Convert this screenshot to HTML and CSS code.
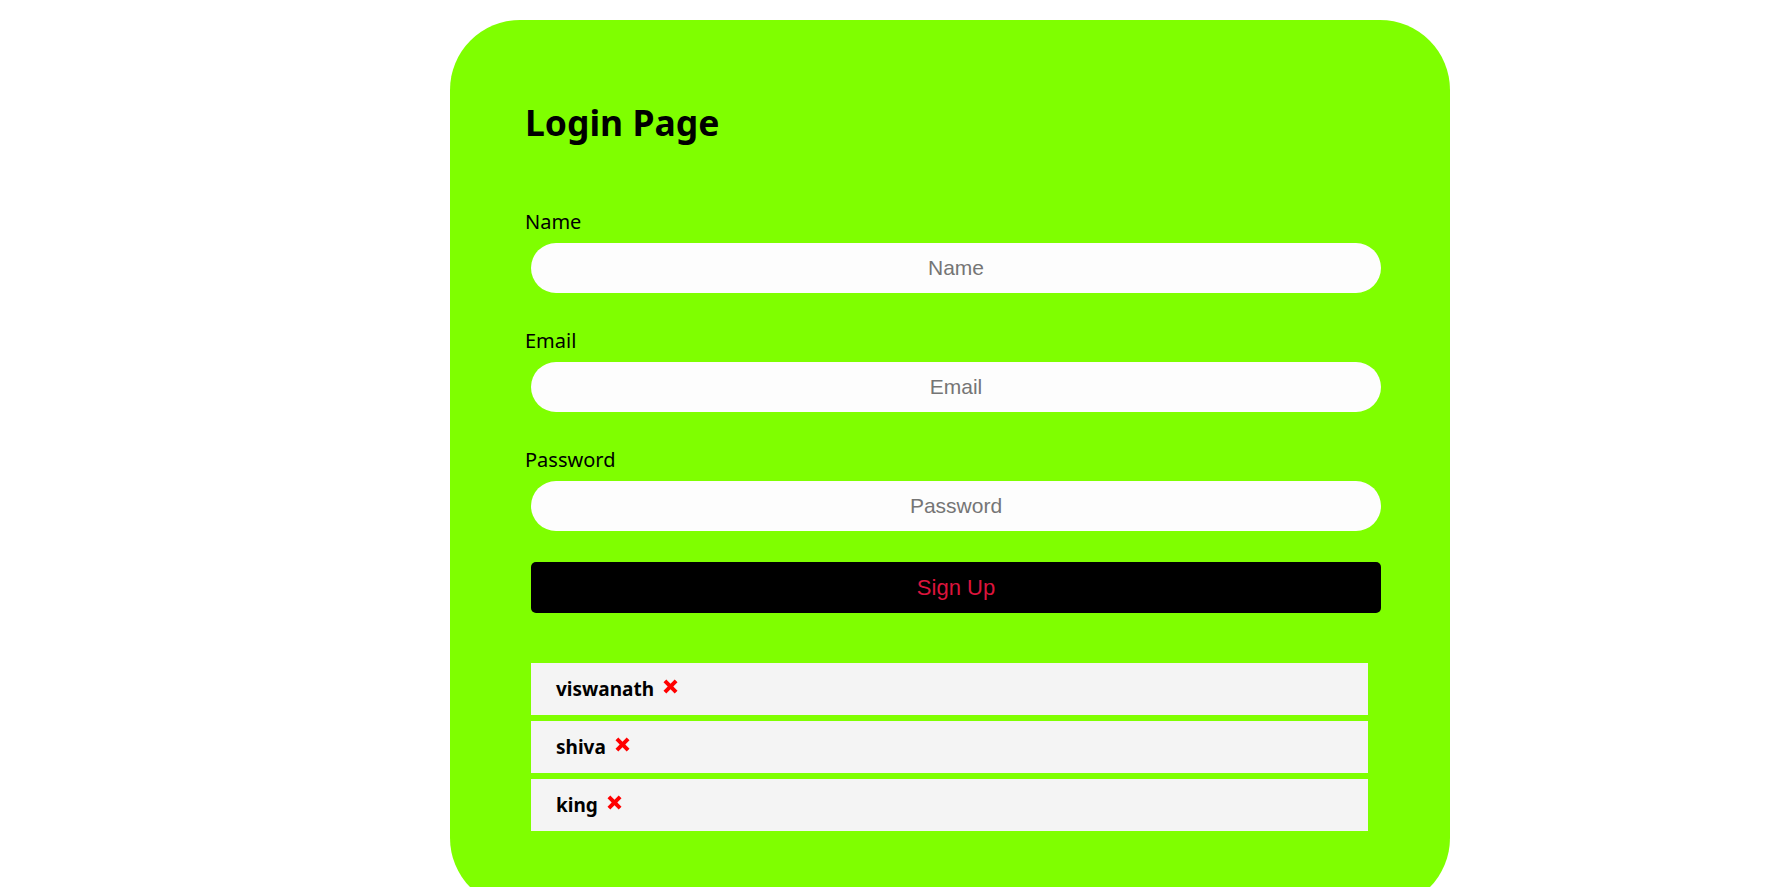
FILE: index.html
```html
<!DOCTYPE html>
<html lang="en">
<head>
<meta charset="utf-8">
<title>Login Page</title>
<link rel="stylesheet" href="styles.css">
</head>
<body>
<div class="card">
  <h1 class="title">Login Page</h1>
  <form class="form">
    <div class="field">
      <label class="label" for="name">Name</label>
      <input class="input" id="name" type="text" placeholder="Name">
    </div>
    <div class="field">
      <label class="label" for="email">Email</label>
      <input class="input" id="email" type="email" placeholder="Email">
    </div>
    <div class="field">
      <label class="label" for="password">Password</label>
      <input class="input" id="password" type="password" placeholder="Password">
    </div>
    <button class="submit" type="button">Sign Up</button>
  </form>
  <ul class="list">
    <li class="item"><span class="item-name">viswanath</span><svg class="remove" width="15" height="15" viewBox="0 0 15 15"><path d="M0.5 3.3 3.3 0.5 7.5 4.7 11.7 0.5 14.5 3.3 10.3 7.5 14.5 11.7 11.7 14.5 7.5 10.3 3.3 14.5 0.5 11.7 4.7 7.5Z" fill="#ff0000"/></svg></li>
    <li class="item"><span class="item-name">shiva</span><svg class="remove" width="15" height="15" viewBox="0 0 15 15"><path d="M0.5 3.3 3.3 0.5 7.5 4.7 11.7 0.5 14.5 3.3 10.3 7.5 14.5 11.7 11.7 14.5 7.5 10.3 3.3 14.5 0.5 11.7 4.7 7.5Z" fill="#ff0000"/></svg></li>
    <li class="item"><span class="item-name">king</span><svg class="remove" width="15" height="15" viewBox="0 0 15 15"><path d="M0.5 3.3 3.3 0.5 7.5 4.7 11.7 0.5 14.5 3.3 10.3 7.5 14.5 11.7 11.7 14.5 7.5 10.3 3.3 14.5 0.5 11.7 4.7 7.5Z" fill="#ff0000"/></svg></li>
  </ul>
</div>
</body>
</html>
```

FILE: styles.css
```css
html, body {
  margin: 0;
  padding: 0;
  background: #ffffff;
}

body {
  font-family: "Noto Sans", "Open Sans", sans-serif;
  color: #000000;
}

.card {
  box-sizing: border-box;
  width: 1000px;
  margin: 20px 0 0 450px;
  padding: 78px 0 77px 75px;
  background: #7fff00;
  border-radius: 70px;
}

.title {
  margin: 0 0 63px 0;
  font-size: 35.5px;
  line-height: 48px;
  font-weight: 700;
}

.form {
  display: flex;
  flex-direction: column;
  margin: 0;
}

.field {
  display: flex;
  flex-direction: column;
  margin-bottom: 35px;
}

.field:last-of-type {
  margin-bottom: 31px;
}

.label {
  display: block;
  font-size: 20px;
  line-height: 26px;
}

.input {
  box-sizing: border-box;
  width: 850px;
  height: 50px;
  margin: 8px 0 0 6px;
  padding: 0 20px;
  border: none;
  border-radius: 25px;
  background: #fdfdfd;
  font-family: "Liberation Sans", Arial, sans-serif;
  font-size: 21px;
  text-align: center;
  outline: none;
}

.input::placeholder {
  color: #757575;
}

.submit {
  box-sizing: border-box;
  width: 850px;
  height: 51px;
  margin: 0 0 0 6px;
  border: none;
  border-radius: 5px;
  background: #000000;
  color: #dc143c;
  font-family: "Liberation Sans", Arial, sans-serif;
  font-size: 22px;
}

.list {
  list-style: none;
  margin: 50px 0 0 6px;
  padding: 0;
  display: flex;
  flex-direction: column;
  gap: 6px;
  width: 837px;
}

.item {
  box-sizing: border-box;
  height: 52px;
  display: flex;
  align-items: center;
  padding-left: 25px;
  background: #f4f4f4;
  font-size: 19px;
  font-weight: 700;
}

.item-name {
  line-height: 26px;
}

.remove {
  margin-left: 9px;
  margin-top: -6px;
}
```
